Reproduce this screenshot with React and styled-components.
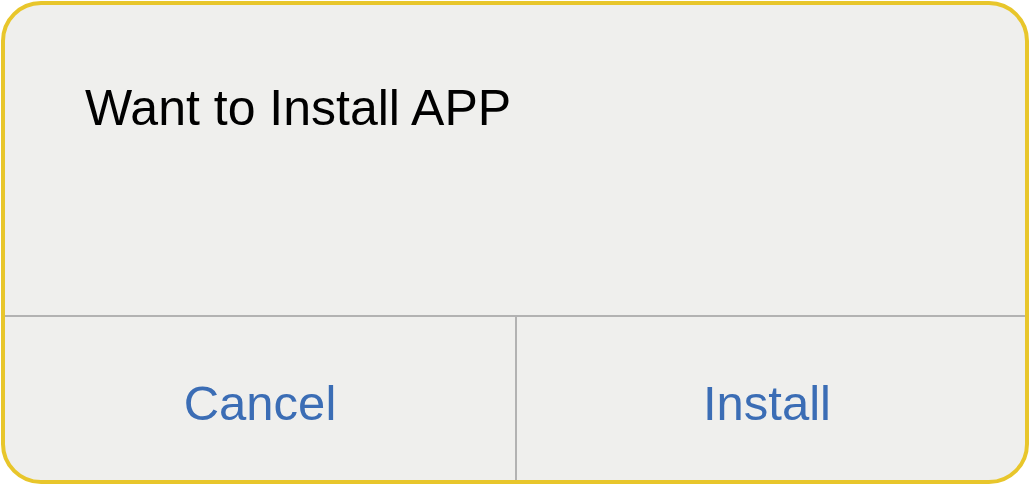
import React from "react";
import styled, { createGlobalStyle } from "styled-components";

const Global = createGlobalStyle`
  html, body { margin: 0; padding: 0; background: #ffffff; }
  body { font-family: "Liberation Sans", Arial, sans-serif; }
`;

const Page = styled.div`
  padding: 1px 0 0 1px;
`;

const Dialog = styled.div`
  box-sizing: border-box;
  width: 1028px;
  height: 483px;
  border: 4px solid #e8c62b;
  border-radius: 40px;
  background: #efefed;
  overflow: hidden;
  display: flex;
  flex-direction: column;
`;

const Message = styled.div`
  box-sizing: border-box;
  height: 312px;
  padding: 78px 0 0 80px;
  font-size: 50px;
  line-height: 50px;
  color: #000;
  border-bottom: 2px solid #b2b2b2;
`;

const Actions = styled.div`
  flex: 1;
  display: grid;
  grid-template-columns: 510px 1fr;
`;

const Action = styled.button`
  appearance: none;
  border: none;
  background: transparent;
  margin: 0;
  padding: 62px ${(p) => (p.$divider ? "8px" : "0")} 0 0;
  display: flex;
  justify-content: center;
  align-items: flex-start;
  font-family: "Liberation Sans", Arial, sans-serif;
  font-size: 49px;
  line-height: 49px;
  color: #3b6db5;
  cursor: pointer;
  border-left: ${(p) => (p.$divider ? "2px solid #b2b2b2" : "none")};
`;

export default function App() {
  return (
    <>
      <Global />
      <Page>
        <Dialog>
          <Message>Want to Install APP</Message>
          <Actions>
            <Action>Cancel</Action>
            <Action $divider>Install</Action>
          </Actions>
        </Dialog>
      </Page>
    </>
  );
}
